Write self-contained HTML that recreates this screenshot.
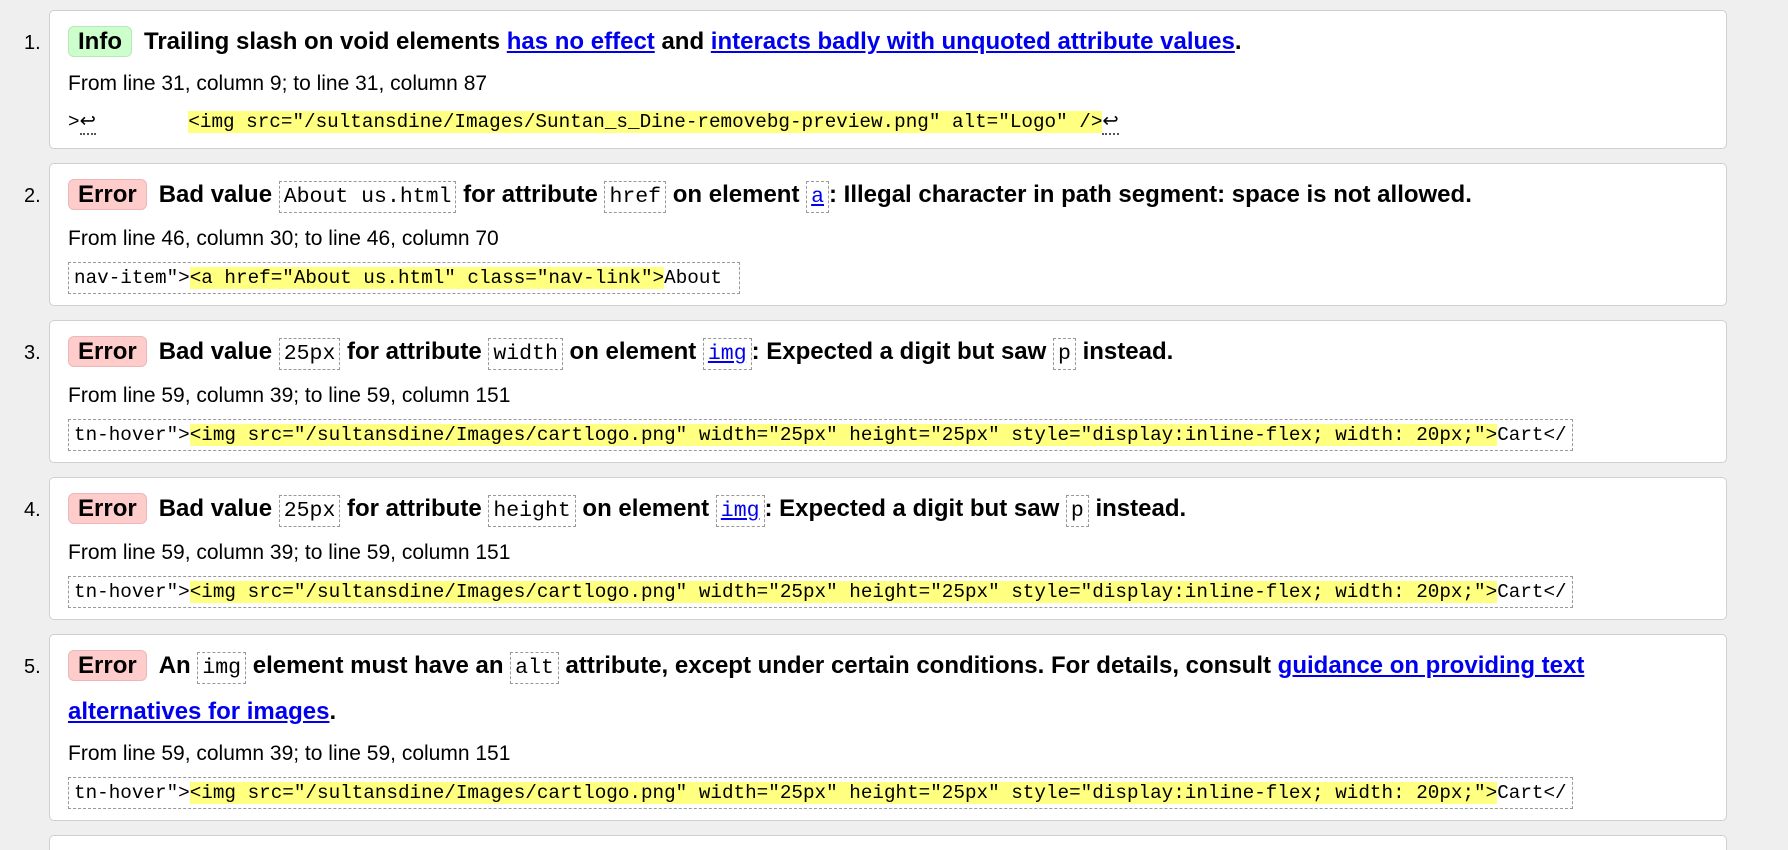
<!DOCTYPE html>
<html><head><meta charset="utf-8"><style>
html,body{margin:0;padding:0;background:#efefef;width:1788px;height:850px;overflow:hidden;font-family:"Liberation Sans",Arial,sans-serif;color:#000}
ol{margin:0;padding:0;list-style:none}
li{position:relative;margin:0 0 14px 49px;width:1678px;box-sizing:border-box;background:#fff;border:1px solid #d0d0d0;border-radius:5px;padding:9px 20px 11px 18px}
li .n{position:absolute;left:-26px;top:21px;font-size:20px;line-height:22px}
.t{font-size:24px;font-weight:bold;line-height:44px}
.b{display:inline-block;padding:0 9px;line-height:29px;border-radius:6px;margin-right:12px;font-size:24px}
.info{background:#ccffcc;border:1px solid #b8e8b8}
.err{background:#ffcccc;border:1px solid #eab8b8}
a{color:#0000ee;text-decoration:underline}
code{font-family:"Liberation Mono",monospace;font-weight:normal;font-size:21.5px;border:1px dashed #999;padding:3px 4px;}
.f{font-size:21px;line-height:40px}
.c{font-family:"Liberation Mono",monospace;font-size:19.3px;line-height:30px;white-space:pre;display:inline-block;padding:0 5px;margin-top:3px;border:1px dashed #999}
.c.nb{border:none;padding:0}
mark{background:#ffff80}
.u{border-bottom:2px dotted #555}
</style></head><body>
<div style="height:10px"></div>
<ol>
<li><span class="n">1.</span><div class="t"><span class="b info">Info</span>Trailing slash on void elements <a>has no effect</a> and <a>interacts badly with unquoted attribute values</a>.</div>
<div class="f">From line 31, column 9; to line 31, column 87</div>
<div class="c nb">&gt;<span class="u">↩</span>        <mark>&lt;img src="/sultansdine/Images/Suntan_s_Dine-removebg-preview.png" alt="Logo" /&gt;</mark><span class="u">↩</span></div></li>

<li><span class="n">2.</span><div class="t"><span class="b err">Error</span>Bad value <code>About us.html</code> for attribute <code>href</code> on element <code><a>a</a></code>: Illegal character in path segment: space is not allowed.</div>
<div class="f">From line 46, column 30; to line 46, column 70</div>
<div class="c">nav-item"&gt;<mark>&lt;a href="About us.html" class="nav-link"&gt;</mark>About </div></li>

<li><span class="n">3.</span><div class="t"><span class="b err">Error</span>Bad value <code>25px</code> for attribute <code>width</code> on element <code><a>img</a></code>: Expected a digit but saw <code>p</code> instead.</div>
<div class="f">From line 59, column 39; to line 59, column 151</div>
<div class="c">tn-hover"&gt;<mark>&lt;img src="/sultansdine/Images/cartlogo.png" width="25px" height="25px" style="display:inline-flex; width: 20px;"&gt;</mark>Cart&lt;/</div></li>

<li><span class="n">4.</span><div class="t"><span class="b err">Error</span>Bad value <code>25px</code> for attribute <code>height</code> on element <code><a>img</a></code>: Expected a digit but saw <code>p</code> instead.</div>
<div class="f">From line 59, column 39; to line 59, column 151</div>
<div class="c">tn-hover"&gt;<mark>&lt;img src="/sultansdine/Images/cartlogo.png" width="25px" height="25px" style="display:inline-flex; width: 20px;"&gt;</mark>Cart&lt;/</div></li>

<li><span class="n">5.</span><div class="t"><span class="b err">Error</span>An <code>img</code> element must have an <code>alt</code> attribute, except under certain conditions. For details, consult <a>guidance on providing text</a><br><a>alternatives for images</a>.</div>
<div class="f">From line 59, column 39; to line 59, column 151</div>
<div class="c">tn-hover"&gt;<mark>&lt;img src="/sultansdine/Images/cartlogo.png" width="25px" height="25px" style="display:inline-flex; width: 20px;"&gt;</mark>Cart&lt;/</div></li>

<li><span class="n">6.</span><div class="t"><span class="b err">Error</span>Bad value <code>25px</code></div></li>
</ol>
</body></html>
